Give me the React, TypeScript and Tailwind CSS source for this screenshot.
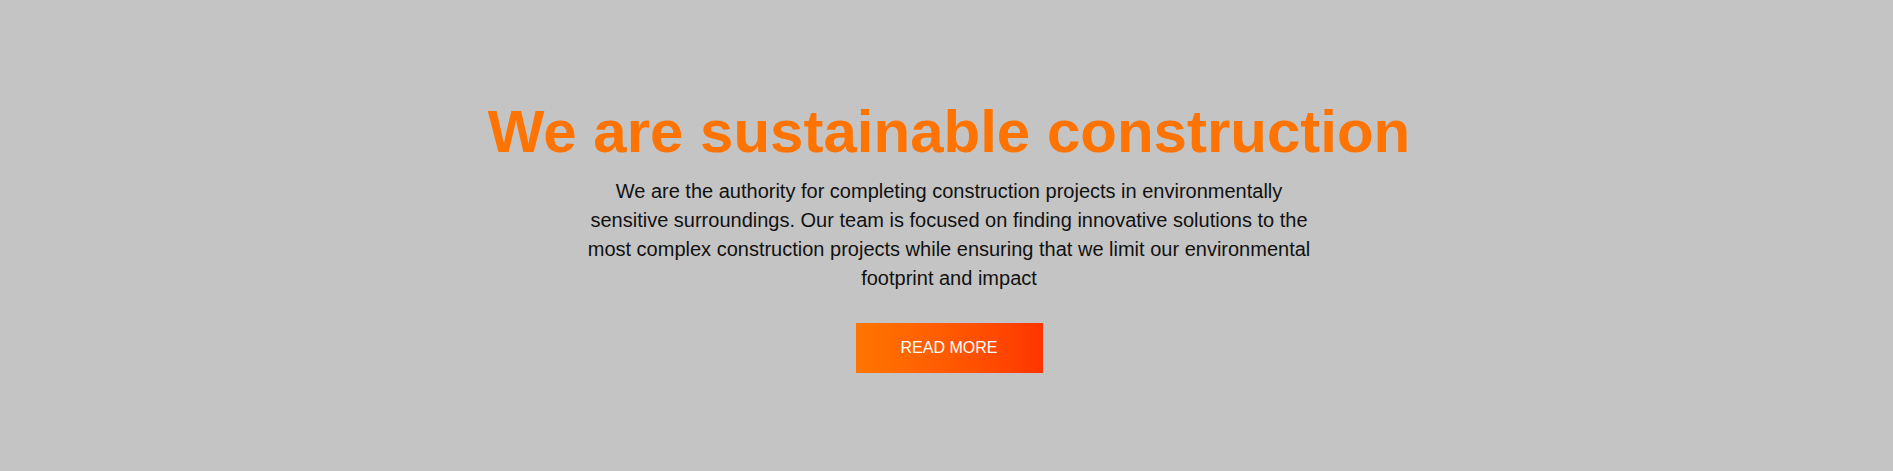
export default function App() {
  return (
    <div
      className="w-full h-[471px] bg-[#c4c4c4] flex flex-col items-center justify-center pl-[5px] pt-[4px]"
      style={{ fontFamily: '"Liberation Sans", Arial, sans-serif' }}
    >
      <h1 className="text-[60px] leading-[60px] font-bold text-[#ff7300] text-center">
        We are sustainable construction
      </h1>
      <p className="mt-[15px] max-w-[740px] text-center text-[20px] leading-[28.8px] text-[#111111]">
        We are the authority for completing construction projects in environmentally sensitive surroundings. Our team is focused on finding innovative solutions to the most complex construction projects while ensuring that we limit our environmental footprint and impact
      </p>
      <button className="mt-[30px] w-[187px] h-[50px] bg-gradient-to-r from-[#ff7500] to-[#ff3300] text-white text-[16px] uppercase">
        READ MORE
      </button>
    </div>
  );
}
